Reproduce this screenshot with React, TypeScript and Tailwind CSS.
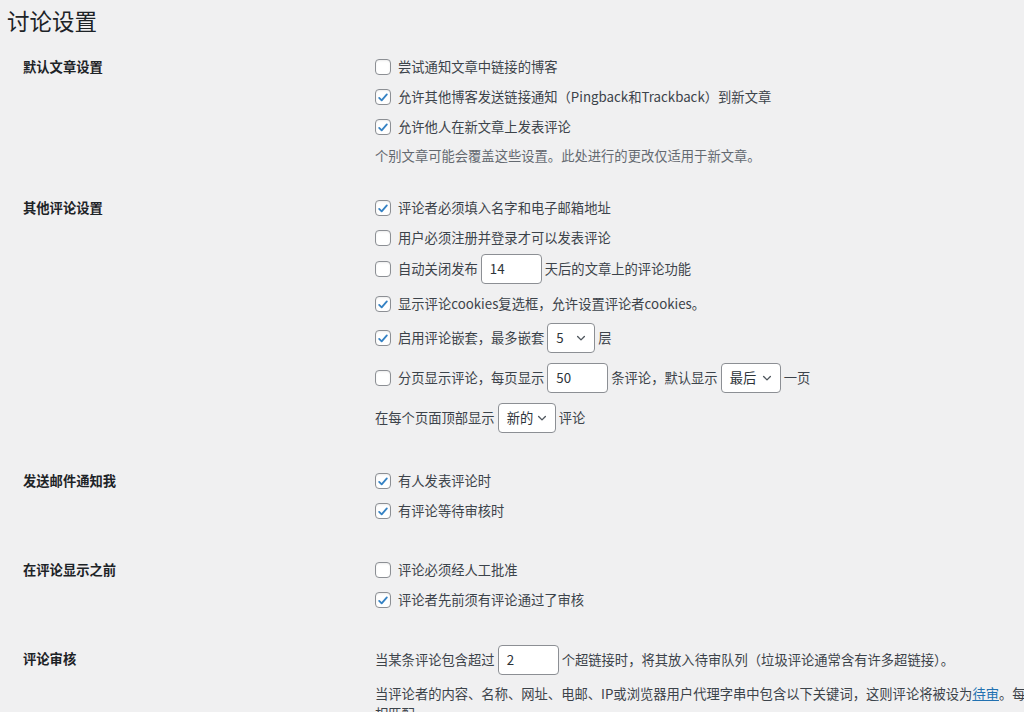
import React from 'react';

const Check = ({ checked }: { checked?: boolean }) => (
  <span className="mr-[7px] flex h-[16px] w-[16px] shrink-0 items-center justify-center rounded-[4px] border border-[#8c8f94] bg-white shadow-[inset_0_1px_2px_rgba(0,0,0,0.08)]">
    {checked && (
      <svg viewBox="0 0 20 20" className="h-[15px] w-[15px]">
        <path d="M4.5 10.5l3.6 3.6 7.4-8.6" fill="none" stroke="#3582c4" strokeWidth="2.6" strokeLinecap="round" strokeLinejoin="round" />
      </svg>
    )}
  </span>
);

const TextBox = ({ value, w }: { value: string; w: string }) => (
  <span className={`mx-[3px] flex h-[30px] items-center rounded-[4px] border border-[#8c8f94] bg-white pl-[8px] text-[#2c3338] ${w}`}>
    {value}
  </span>
);

const Select = ({ value, w }: { value: string; w: string }) => (
  <span className={`mx-[3px] flex h-[30px] items-center justify-between rounded-[4px] border border-[#8c8f94] bg-white pl-[8px] pr-[7px] text-[#2c3338] ${w}`}>
    <span>{value}</span>
    <svg viewBox="0 0 16 16" className="h-[12px] w-[12px]">
      <path d="M3.5 6l4.5 4.5L12.5 6" fill="none" stroke="#50575e" strokeWidth="1.8" strokeLinecap="round" strokeLinejoin="round" />
    </svg>
  </span>
);

const Row = ({ h, children }: { h: string; children: React.ReactNode }) => (
  <div className={`flex items-center whitespace-nowrap ${h}`}>{children}</div>
);

const Label = ({ children }: { children: React.ReactNode }) => (
  <div className="flex h-[30px] w-[375px] shrink-0 items-center pl-[23px] font-semibold text-[#1d2327]">{children}</div>
);

export default function App() {
  return (
    <div className="h-[712px] w-full overflow-hidden bg-[#f0f0f1] font-['Noto_Sans_CJK_SC',sans-serif] text-[13.3px] leading-[20px] text-[#3c434a]">
      <h1 className="h-[52px] pl-[7px] pt-[5px] text-[22.5px] font-normal leading-[30px] text-[#1d2327]">讨论设置</h1>

      <div className="flex">
        <Label>默认文章设置</Label>
        <div className="flex flex-col">
          <Row h="h-[30px]"><Check />尝试通知文章中链接的博客</Row>
          <Row h="h-[30px]"><Check checked />允许其他博客发送链接通知（Pingback和Trackback）到新文章</Row>
          <Row h="h-[30px]"><Check checked />允许他人在新文章上发表评论</Row>
          <Row h="h-[28px]"><span className="text-[#646970]">个别文章可能会覆盖这些设置。此处进行的更改仅适用于新文章。</span></Row>
        </div>
      </div>

      <div className="mt-[23px] flex">
        <Label>其他评论设置</Label>
        <div className="flex flex-col">
          <Row h="h-[30px]"><Check checked />评论者必须填入名字和电子邮箱地址</Row>
          <Row h="h-[30px]"><Check />用户必须注册并登录才可以发表评论</Row>
          <Row h="h-[32px]"><Check />自动关闭发布<TextBox value="14" w="w-[61px]" />天后的文章上的评论功能</Row>
          <Row h="h-[38px]"><Check checked />显示评论cookies复选框，允许设置评论者cookies。</Row>
          <Row h="h-[30px]"><Check checked />启用评论嵌套，最多嵌套<Select value="5" w="w-[48px]" />层</Row>
          <Row h="h-[50px]"><Check />分页显示评论，每页显示<TextBox value="50" w="w-[61px]" />条评论，默认显示<Select value="最后" w="w-[60px]" />一页</Row>
          <Row h="h-[30px]">在每个页面顶部显示<Select value="新的" w="w-[58px]" />评论</Row>
        </div>
      </div>

      <div className="mt-[33px] flex">
        <Label>发送邮件通知我</Label>
        <div className="flex flex-col">
          <Row h="h-[30px]"><Check checked />有人发表评论时</Row>
          <Row h="h-[30px]"><Check checked />有评论等待审核时</Row>
        </div>
      </div>

      <div className="mt-[29px] flex">
        <Label>在评论显示之前</Label>
        <div className="flex flex-col">
          <Row h="h-[30px]"><Check />评论必须经人工批准</Row>
          <Row h="h-[30px]"><Check checked />评论者先前须有评论通过了审核</Row>
        </div>
      </div>

      <div className="mt-[29px] flex">
        <Label>评论审核</Label>
        <div className="flex min-w-0 flex-col">
          <Row h="h-[32px]">当某条评论包含超过<TextBox value="2" w="w-[61px]" />个超链接时，将其放入待审队列（垃圾评论通常含有许多超链接）。</Row>
          <div className="mt-[8px] whitespace-nowrap">
            当评论者的内容、名称、网址、电邮、IP或浏览器用户代理字串中包含以下关键词，这则评论将被设为<span className="text-[#2271b1] underline">待审</span>。每行输入一个词或IP地址，它会与单词内部
          </div>
          <div className="whitespace-nowrap">相匹配。</div>
        </div>
      </div>
    </div>
  );
}
